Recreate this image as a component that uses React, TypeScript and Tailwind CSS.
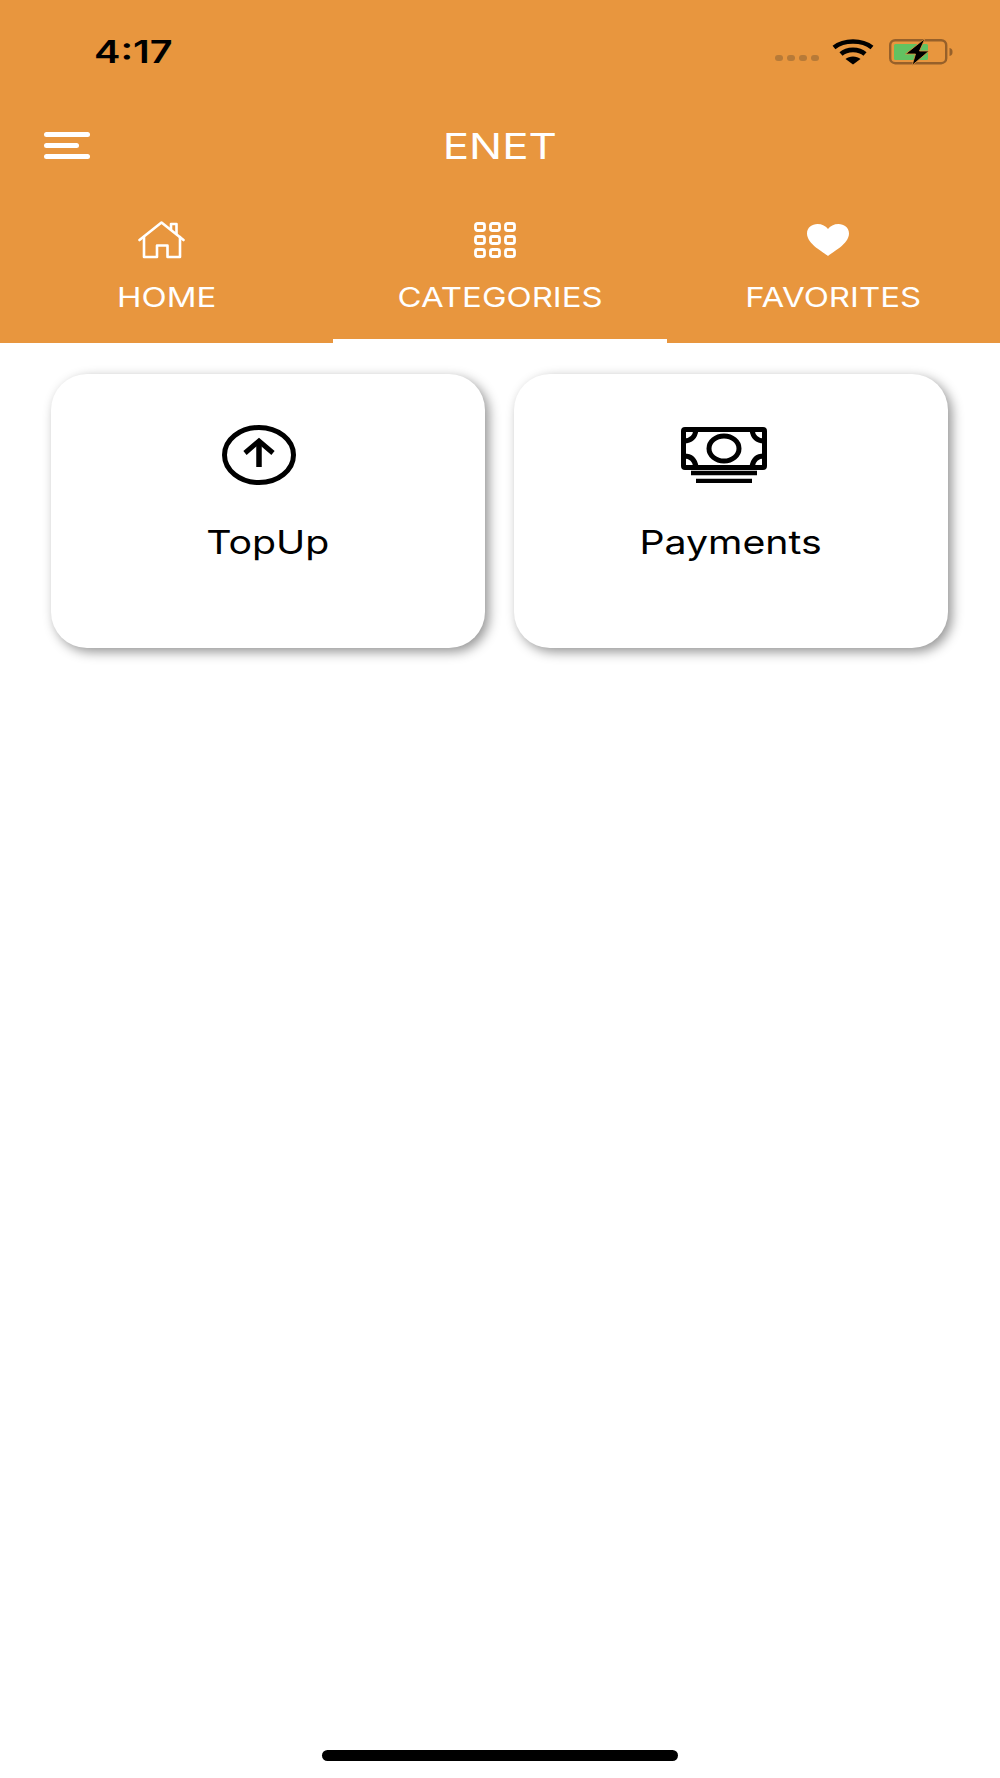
import { ReactNode } from "react";

function HomeIcon() {
  return (
    <svg width="48" height="38" viewBox="0 0 48 38" fill="none" stroke="white" strokeWidth="2.6" strokeLinejoin="round" strokeLinecap="round">
      <path d="M1.5 19 L23.5 1.5 L45.5 19" />
      <path d="M33 8.5 V3 H38.5 V13" />
      <path d="M6 16 V36 H19 V24.5 H29.5 V36 H42 V16" />
    </svg>
  );
}

function GridIcon() {
  const cells = [0, 1, 2, 3, 4, 5, 6, 7, 8];
  return (
    <svg width="42" height="36" viewBox="0 0 42 36" fill="none" stroke="white" strokeWidth="2.8">
      {cells.map((c) => (
        <rect key={c} x={1.5 + (c % 3) * 15} y={1.5 + Math.floor(c / 3) * 13} width="9" height="7" rx="2" />
      ))}
    </svg>
  );
}

function HeartIcon() {
  return (
    <svg width="42" height="32" viewBox="0 0 42 32" fill="white">
      <path d="M21 32 C17 28.5 0 20 0 9.5 C0 3.5 5 0 10.5 0 C15 0 19 2 21 5 C23 2 27 0 31.5 0 C37 0 42 3.5 42 9.5 C42 20 25 28.5 21 32 Z" />
    </svg>
  );
}

function UpCircleIcon() {
  return (
    <svg width="74" height="60" viewBox="0 0 74 60" fill="none" stroke="black">
      <ellipse cx="37" cy="30" rx="34.5" ry="27.5" strokeWidth="5" />
      <path d="M37 42 V17" strokeWidth="5.5" />
      <path d="M23 28 L37 16 L51 28" strokeWidth="5" />
    </svg>
  );
}

function MoneyIcon() {
  return (
    <svg width="86" height="56" viewBox="0 0 86 56" fill="none" stroke="black">
      <rect x="2.5" y="2.5" width="81" height="38" rx="1.5" strokeWidth="5" />
      <ellipse cx="43" cy="21.5" rx="15" ry="12.5" strokeWidth="5" />
      <path d="M3 14 C10 14 14 10 15 3" strokeWidth="5" />
      <path d="M83 14 C76 14 72 10 71 3" strokeWidth="5" />
      <path d="M3 29 C10 29 14 33 15 40" strokeWidth="5" />
      <path d="M83 29 C76 29 72 33 71 40" strokeWidth="5" />
      <path d="M10 46 H76" strokeWidth="4.5" />
      <path d="M15 54 H71" strokeWidth="4.5" />
    </svg>
  );
}

function WifiIcon() {
  return (
    <svg width="42" height="26" viewBox="0 0 42 26" fill="none" stroke="black" strokeWidth="4.6">
      <path d="M2 8.5 C12 0.5 30 0.5 40 8.5" />
      <path d="M9 15 C15 9.5 27 9.5 33 15" />
      <path d="M21 25.5 L13.5 20 C17 16.5 25 16.5 28.5 20 Z" fill="black" stroke="none" />
    </svg>
  );
}

function BatteryIcon() {
  return (
    <svg width="64" height="28" viewBox="0 0 64 28" fill="none">
      <rect x="1.2" y="2.2" width="56" height="23" rx="5" stroke="#96602a" strokeWidth="2.4" />
      <rect x="5" y="6" width="34" height="16" rx="1.5" fill="#62c261" />
      <path d="M60.5 10 C63 10.5 63.5 12 63.5 14 C63.5 16 63 17.5 60.5 18 Z" fill="#96602a" />
      <path d="M36 0.5 L16.5 16 H26.5 L23 27.5 L40 13 H30.5 Z" fill="black" stroke="#e8963e" strokeWidth="0.8" />
    </svg>
  );
}

function Tab({ icon, label, active }: { icon: ReactNode; label: string; active?: boolean }) {
  return (
    <div className={`flex flex-col items-center h-[121px] border-b-4 ${active ? "border-white" : "border-transparent"}`}>
      <div className="h-[38px] flex items-center -ml-[10px] -mt-[1px]">{icon}</div>
      <span className="mt-[23px] text-[27px] leading-[32px] text-white scale-x-[1.22]">{label}</span>
    </div>
  );
}

function Card({ icon, label, iconClass }: { icon: ReactNode; label: string; iconClass: string }) {
  return (
    <div className="h-[274px] rounded-[36px] bg-white shadow-[4px_4px_12px_rgba(0,0,0,0.42)] flex flex-col items-center pt-[51px]">
      <div className={`h-[60px] flex items-center ${iconClass}`}>{icon}</div>
      <span className="mt-[37px] text-[33px] leading-[40px] text-black scale-x-[1.19] -ml-[1px]">{label}</span>
    </div>
  );
}

export default function App() {
  return (
    <div className="relative w-[1000px] h-[1778px] bg-white font-['Inter',sans-serif] overflow-hidden">
      <div className="h-[343px] bg-[#e8963e] flex flex-col">
        {/* status bar */}
        <div className="h-[104px] flex items-start justify-between pl-[94px] pr-[47px] pt-[33px]">
          <span className="text-[31px] leading-[38px] font-semibold text-black scale-x-[1.28] origin-left">4:17</span>
          <div className="flex items-center pt-[5px]">
            <div className="flex gap-[4px] mt-[12px] mr-[13px]">
              <div className="w-2 h-[6px] rounded-full bg-[#b77a38]" />
              <div className="w-2 h-[6px] rounded-full bg-[#b77a38]" />
              <div className="w-2 h-[6px] rounded-full bg-[#b77a38]" />
              <div className="w-2 h-[6px] rounded-full bg-[#b77a38]" />
            </div>
            <div className="mr-[15px]"><WifiIcon /></div>
            <BatteryIcon />
          </div>
        </div>
        {/* title row */}
        <div className="h-[118px] flex items-start relative justify-center pt-[20px]">
          <div className="absolute left-[44px] top-[28px] w-[46px] flex flex-col gap-[6px]">
            <div className="h-[5px] w-[46px] rounded-full bg-white" />
            <div className="h-[5px] w-[35px] rounded-full bg-white" />
            <div className="h-[5px] w-[46px] rounded-full bg-white" />
          </div>
          <span className="text-[36px] leading-[44px] text-white scale-x-[1.22]">ENET</span>
        </div>
        {/* tabs */}
        <div className="grid grid-cols-3">
          <Tab icon={<HomeIcon />} label="HOME" />
          <Tab icon={<GridIcon />} label="CATEGORIES" active />
          <Tab icon={<HeartIcon />} label="FAVORITES" />
        </div>
      </div>
      <div className="grid grid-cols-2 gap-[29px] pl-[51px] pr-[52px] pt-[31px]">
        <Card icon={<UpCircleIcon />} label="TopUp" iconClass="-ml-[19px]" />
        <Card icon={<MoneyIcon />} label="Payments" iconClass="-ml-[15px]" />
      </div>
      <div className="absolute left-[322px] top-[1750px] w-[356px] h-[11px] rounded-full bg-black" />
    </div>
  );
}
